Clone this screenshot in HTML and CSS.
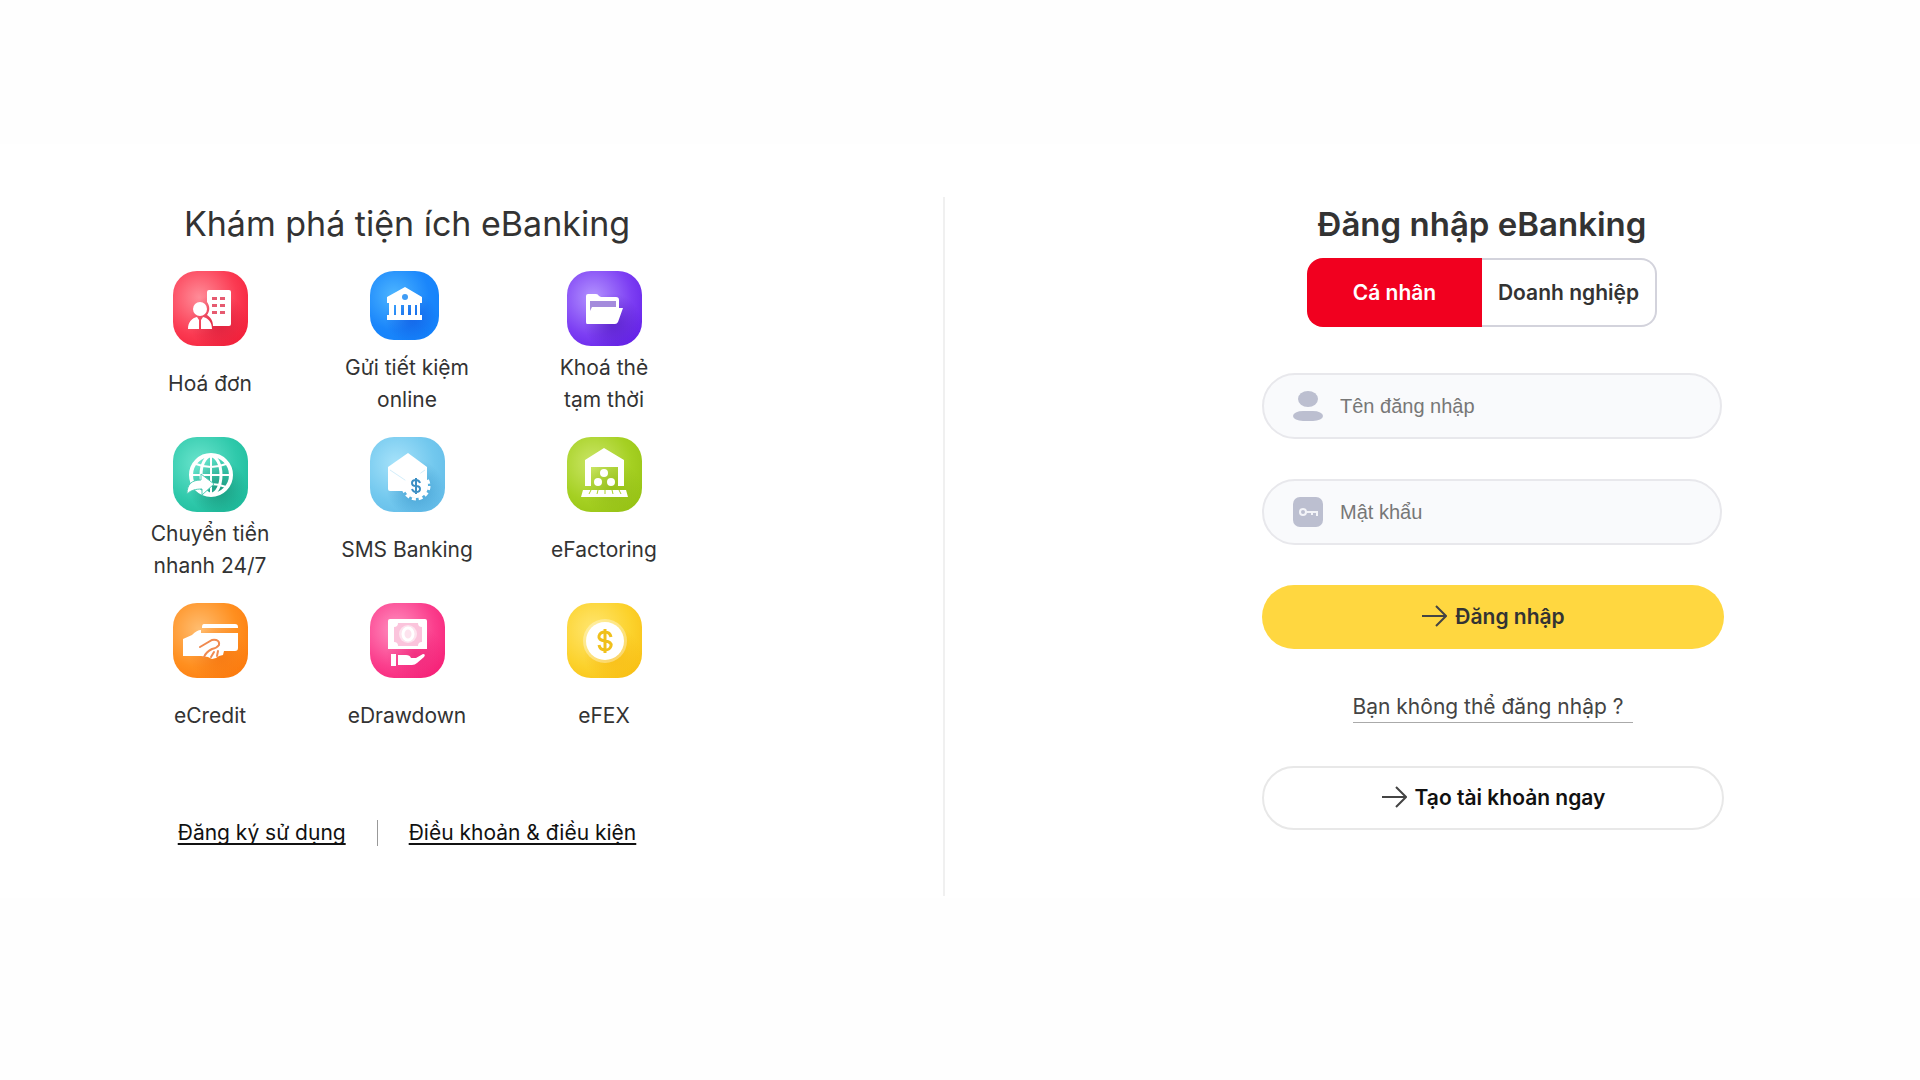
FILE: index.html
```html
<!DOCTYPE html>
<html lang="vi">
<head>
<meta charset="utf-8">
<meta name="viewport" content="width=device-width, initial-scale=1">
<title>eBanking</title>
<link rel="stylesheet" href="styles.css">
</head>
<body>
<main class="page">
  <section class="explore">
    <h2 class="explore-title">Khám phá tiện ích eBanking</h2>
    <ul class="services">
      <li class="service">
        <span class="tile tile-red">
          <svg viewBox="0 0 75 75" aria-hidden="true">
            <path fill="#fff" d="M36 19h20a2 2 0 0 1 2 2v32a2 2 0 0 1-2 2H40c0-6-3-9-6-11 3-4 3-9 0-13V21a2 2 0 0 1 2-2z"/>
            <path fill="#e65a70" d="M39 26h5v3h-5zM47 26h5v3h-5zM39 33h5v3h-5zM47 33h5v3h-5zM39 40h5v3h-5zM47 40h5v3h-5z"/>
            <circle cx="27" cy="38" r="7" fill="#fff"/>
            <path fill="#fff" d="M15 58c0-7 4-11 9-12l2 3v9zM28 58v-9l2-3c5 1 9 5 9 12z"/>
          </svg>
        </span>
        <span class="service-name">Hoá đơn</span>
      </li>
      <li class="service">
        <span class="tile tile-blue">
          <svg viewBox="0 0 69 69" aria-hidden="true">
            <path fill="#fff" fill-rule="evenodd" d="M35 16l17 10v6h-2v12h2v5H17v-5h2V32h-2v-6zM24 34v10h2V34zm7 0v10h3V34zm7 0v10h3V34zm7 0v10h2V34z"/>
            <circle cx="35" cy="26" r="3" fill="#3f9cf5"/>
          </svg>
        </span>
        <span class="service-name">Gửi tiết kiệm online</span>
      </li>
      <li class="service">
        <span class="tile tile-purple">
          <svg viewBox="0 0 75 75" aria-hidden="true">
            <path fill="#fff" d="M21 23h8q2 0 3 2l2 1h15q3 0 3 3v8h4l-5 14q-1 2-3 2H20q-1 0-1-2V25q0-2 2-2z"/>
            <path fill="#a48bdc" d="M23 30h26v6H25l-2 4z"/>
          </svg>
        </span>
        <span class="service-name">Khoá thẻ<br>tạm thời</span>
      </li>
      <li class="service">
        <span class="tile tile-teal">
          <svg viewBox="0 0 75 75" aria-hidden="true">
            <g fill="none" stroke="#fff" stroke-width="2">
              <circle cx="38" cy="38" r="20" stroke-width="4"/>
              <ellipse cx="38" cy="38" rx="10" ry="19" stroke-width="3"/>
              <path d="M38 18v40M19 38h38M23 27q15 6 30 0M23 50q15-6 30 0"/>
            </g>
            <path fill="#fff" stroke="#4fcdb6" d="M14 57c0-10 5-14 14-14v-6l13 10-12 11v-6c-6 0-11 1-15 5z"/>
          </svg>
        </span>
        <span class="service-name">Chuyển tiền nhanh 24/7</span>
      </li>
      <li class="service">
        <span class="tile tile-sky">
          <svg viewBox="0 0 75 75" aria-hidden="true">
            <path fill="#fff" d="M18 30l20-14 19 14v24H20q-2 0-2-2z"/>
            <path fill="none" stroke="#d3eefb" stroke-width="1" d="M20 33l18 12 17-12"/>
            <circle cx="46" cy="49" r="12" fill="#fff"/>
            <circle cx="46" cy="49" r="13" fill="none" stroke="#fff" stroke-width="3" stroke-dasharray="4 2.8"/>
            <path fill="none" stroke="#3c8fc4" stroke-width="2" d="M50 46q-1-3-4-3-4 0-4 3t4 3 4 3-4 3q-3 0-4-3M46 41v16"/>
          </svg>
        </span>
        <span class="service-name">SMS Banking</span>
      </li>
      <li class="service">
        <span class="tile tile-green">
          <svg viewBox="0 0 75 75" aria-hidden="true">
            <path fill="#fff" d="M37 11l20 12v26h-6V30H24v19h-6V23z"/>
            <circle cx="37" cy="36" r="4" fill="#fff"/>
            <circle cx="31" cy="45" r="4" fill="#fff"/>
            <circle cx="44" cy="45" r="4" fill="#fff"/>
            <path fill="#fff" d="M16 53h43l2 7H14z"/>
            <path stroke="#a9d027" stroke-width="1" d="M24 53l-2 4M31 53l-1 4M38 53v4M45 53l1 4M52 53l2 4"/>
          </svg>
        </span>
        <span class="service-name">eFactoring</span>
      </li>
      <li class="service">
        <span class="tile tile-orange">
          <svg viewBox="0 0 75 75" aria-hidden="true">
            <path fill="#fff" d="M31 21h31q3 0 3 3v1H29v-1q0-3 2-3zM10 36l9-4q5-5 9-5v3h37v15q0 3-3 3H51l-1 4-4 1-3 2-4 1-4-2-7-1H10z"/>
            <path fill="none" stroke="#f08a50" stroke-width="2" stroke-linecap="round" d="M27 44l12-7q8-1 7 5-2 3-7 4-6 3-8 8M41 49l-3 5M45 48l-1 5"/>
          </svg>
        </span>
        <span class="service-name">eCredit</span>
      </li>
      <li class="service">
        <span class="tile tile-pink">
          <svg viewBox="0 0 75 75" aria-hidden="true">
            <path fill="#fff" d="M20 16h35q2 0 2 2v28H18V18q0-2 2-2z"/>
            <path fill="#fbc4dc" d="M28 20h20q0 4 4 4v15q-4 0-4 4H28q0-4-4-4V24q4 0 4-4z"/>
            <circle cx="38" cy="31" r="9" fill="#fde3ee"/>
            <ellipse cx="38" cy="31" rx="5" ry="6" fill="none" stroke="#fff" stroke-width="3"/>
            <path fill="#fff" d="M21 51h5v12h-5zM28 52h8q4 0 5 3h5l7-4q3 0 1 3l-7 6q-2 2-5 2H28z"/>
          </svg>
        </span>
        <span class="service-name">eDrawdown</span>
      </li>
      <li class="service">
        <span class="tile tile-yellow">
          <svg viewBox="0 0 75 75" aria-hidden="true">
            <circle cx="38" cy="38" r="22" fill="#fff" opacity=".35"/>
            <circle cx="38" cy="38" r="19" fill="#fff"/>
            <path fill="none" stroke="#f0c01c" stroke-width="3" d="M44 34q-1-5-6-5t-6 4 6 5 6 5-6 4-6-5M38 26v24"/>
          </svg>
        </span>
        <span class="service-name">eFEX</span>
      </li>
    </ul>
    <nav class="legal">
      <a href="#">Đăng ký sử dụng</a>
      <span class="legal-divider"></span>
      <a href="#">Điều khoản &amp; điều kiện</a>
    </nav>
  </section>

  <section class="login">
    <form class="login-form">
      <div class="login-head">
        <h1 class="login-title">Đăng nhập eBanking</h1>
        <div class="tabs">
          <button type="button" class="tab tab-active">Cá nhân</button>
          <button type="button" class="tab">Doanh nghiệp</button>
        </div>
      </div>
      <label class="field">
        <svg class="field-icon" viewBox="0 0 32 32" aria-hidden="true">
          <ellipse cx="16" cy="9" rx="10" ry="8" fill="#bcbfd0"/>
          <rect x="1" y="21" width="30" height="10" rx="10" ry="5" fill="#bcbfd0"/>
        </svg>
        <input type="text" placeholder="Tên đăng nhập" aria-label="Tên đăng nhập">
      </label>
      <label class="field">
        <svg class="field-icon" viewBox="0 0 32 32" aria-hidden="true">
          <rect x="1" y="1" width="30" height="30" rx="7" fill="#bcbfd0"/>
          <circle cx="11" cy="16" r="3" fill="none" stroke="#f3f4f8" stroke-width="2"/>
          <path fill="none" stroke="#f3f4f8" stroke-width="2" d="M14 16h11v4M20 16v3"/>
        </svg>
        <input type="password" placeholder="Mật khẩu" aria-label="Mật khẩu">
      </label>
      <button type="submit" class="btn btn-primary">
        <svg class="arrow" viewBox="0 0 26 24" aria-hidden="true"><path d="M1 11h24M15 1l10 10-10 10"/></svg>
        Đăng nhập
      </button>
      <a class="help" href="#">Bạn không thể đăng nhập ?</a>
      <button type="button" class="btn btn-outline">
        <svg class="arrow" viewBox="0 0 26 24" aria-hidden="true"><path d="M1 11h24M15 1l10 10-10 10"/></svg>
        Tạo tài khoản ngay
      </button>
    </form>
  </section>
</main>
</body>
</html>
```
FILE: styles.css
```css
* { box-sizing: border-box; }

body {
  margin: 0;
  padding-top: 144px;
  background: #fefefe;
  color: #333;
  font-family: Inter, "Noto Sans", sans-serif;
}

h1, h2, ul { margin: 0; padding: 0; font-weight: 400; }

.page {
  display: grid;
  grid-template-columns: minmax(0, 63fr) minmax(0, 65fr);
  padding: 53px 0 2px;
  background: #fff;
}

.explore {
  display: flex;
  flex-direction: column;
  align-items: center;
  min-height: 699px;
  padding-right: 129px;
  border-right: 2px solid #f0f0f0;
}

.explore-title {
  font-size: 34px;
  line-height: 54px;
}

.services {
  display: grid;
  grid-template-columns: repeat(3, 197px);
  row-gap: 21px;
  margin-top: 20px;
  list-style: none;
}

.service {
  display: flex;
  flex-direction: column;
  align-items: center;
}

.tile {
  display: block;
  width: 75px;
  height: 75px;
}

.tile svg {
  display: block;
  width: 100%;
  height: 100%;
  border-radius: 24px;
  background:
    radial-gradient(circle at 60% 68%, var(--shade), transparent 42%),
    radial-gradient(circle at 35% 35%, var(--light), var(--mid) 55%, var(--deep));
}

.tile-red { --light: #ff8c98; --mid: #fb3a52; --deep: #f0142f; --shade: #c80f2d99; }
.tile-blue { --light: #4db5ff; --mid: #1a86fb; --deep: #0f80fb; --shade: #0f50dc99; }
.tile-purple { --light: #b393ff; --mid: #7d3ff3; --deep: #5a14e4; --shade: #4610b499; }
.tile-teal { --light: #6be4cd; --mid: #2fc9ab; --deep: #16b595; --shade: #0a785f99; }
.tile-sky { --light: #a6e2fa; --mid: #72c8ee; --deep: #5cb6e6; --shade: #2382be99; }
.tile-green { --light: #cbe668; --mid: #a5d022; --deep: #90bd0e; --shade: #8cb41499; }
.tile-orange { --light: #ffbd70; --mid: #ff8f1f; --deep: #fb7206; --shade: #f0690a99; }
.tile-pink { --light: #ff8fc0; --mid: #fb3f8d; --deep: #f4136d; --shade: #eb1e7399; }
.tile-yellow { --light: #ffe670; --mid: #fcd22c; --deep: #f7b90c; --shade: #f5af0a99; }

.tile-blue svg {
  width: 69px;
  height: 69px;
}

.service-name {
  display: flex;
  align-items: center;
  justify-content: center;
  width: 140px;
  height: 64px;
  margin-top: 6px;
  text-align: center;
  font-size: 21px;
  line-height: 32px;
}

.legal {
  display: flex;
  align-items: center;
  margin-top: 69px;
  font-size: 21px;
  line-height: 32px;
}

.legal a {
  color: #111;
  text-underline-offset: 3px;
  text-decoration-thickness: 2px;
  text-decoration-skip-ink: none;
}

.legal-divider {
  width: 1px;
  height: 26px;
  margin: 0 31px;
  background: #999;
}

.login {
  display: flex;
  justify-content: center;
  padding-left: 121px;
}

.login-form {
  display: flex;
  flex-direction: column;
  width: 462px;
}

.login-head {
  display: flex;
  flex-direction: column;
  align-items: center;
  padding-right: 22px;
  margin-bottom: 46px;
}

.login-title {
  font-size: 33px;
  font-weight: 600;
  line-height: 54px;
}

.tabs {
  display: grid;
  grid-template-columns: 1fr 1fr;
  width: 350px;
  height: 69px;
  margin-top: 7px;
}

.tab {
  padding: 0;
  border: 2px solid #d3d3dc;
  border-left: 0;
  border-radius: 0 16px 16px 0;
  background: #fff;
  color: #333;
  font: 600 21px/32px Inter, "Noto Sans", sans-serif;
}

.tab-active {
  border: 0;
  border-radius: 16px 0 0 16px;
  background: #f1001f;
  color: #fff;
}

.field {
  display: flex;
  align-items: center;
  height: 66px;
  margin: 0 2px 40px 0;
  padding: 0 28px;
  border: 2px solid #e8e8ec;
  border-radius: 33px;
  background: #f9fafc;
}

.field-icon {
  flex: none;
  width: 32px;
  height: 32px;
}

.field input {
  flex: 1;
  min-width: 0;
  margin-left: 16px;
  padding: 0;
  border: 0;
  outline: 0;
  background: none;
  font: 20px/32px "Liberation Sans", Arial, sans-serif;
}

.field input::placeholder { color: #777; opacity: 1; }

.btn {
  display: flex;
  align-items: center;
  justify-content: center;
  gap: 8px;
  height: 64px;
  padding: 0;
  border: 0;
  border-radius: 32px;
  font: 600 21px/32px Inter, "Noto Sans", sans-serif;
}

.btn-primary { background: #ffd740; color: #333; }

.btn-outline {
  border: 2px solid #e8e8e8;
  background: #fff;
  color: #111;
}

.arrow {
  width: 26px;
  height: 24px;
  fill: none;
  stroke: #444;
  stroke-width: 2;
}

.help {
  align-self: center;
  margin: 43px 0;
  padding-right: 10px;
  border-bottom: 1px solid #aaa;
  color: #444;
  font-size: 21px;
  line-height: 30px;
  text-decoration: none;
}
```
